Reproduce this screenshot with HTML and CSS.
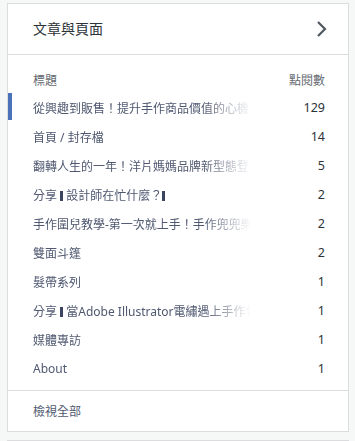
FILE: index.html
```html
<!DOCTYPE html>
<html lang="zh-Hant">
<head>
    <meta charset="UTF-8">
    <meta name="viewport" content="width=device-width, initial-scale=1.0">
    <title>文章與頁面</title>
    <link rel="stylesheet" href="styles.css">
</head>
<body>
    <div class="card">
        <div class="card-header">
            <h2>文章與頁面</h2>
            <svg class="chevron" width="12" height="18" viewBox="0 0 12 18">
                <path d="M2 2 L9 9 L2 16" fill="none" stroke="#50575e" stroke-width="2.2"/>
            </svg>
        </div>

        <div class="list">
            <div class="list-head">
                <span>標題</span>
                <span>點閱數</span>
            </div>
            <div class="row active">
                <span class="title">從興趣到販售！提升手作商品價值的心機</span>
                <span class="count">129</span>
            </div>
            <div class="row">
                <span class="title">首頁 / 封存檔</span>
                <span class="count">14</span>
            </div>
            <div class="row">
                <span class="title">翻轉人生的一年！洋片媽媽品牌新型態登場</span>
                <span class="count">5</span>
            </div>
            <div class="row">
                <span class="title">分享 <span class="glyph"></span> 設計師在忙什麼？<span class="glyph"></span></span>
                <span class="count">2</span>
            </div>
            <div class="row">
                <span class="title">手作圍兒教學-第一次就上手！手作兜兜樂</span>
                <span class="count">2</span>
            </div>
            <div class="row">
                <span class="title">雙面斗篷</span>
                <span class="count">2</span>
            </div>
            <div class="row">
                <span class="title">髮帶系列</span>
                <span class="count">1</span>
            </div>
            <div class="row">
                <span class="title">分享 <span class="glyph"></span> 當Adobe Illustrator電繡遇上手作包</span>
                <span class="count">1</span>
            </div>
            <div class="row">
                <span class="title">媒體專訪</span>
                <span class="count">1</span>
            </div>
            <div class="row">
                <span class="title">About</span>
                <span class="count">1</span>
            </div>
        </div>

        <div class="card-footer">
            <a href="#">檢視全部</a>
        </div>
    </div>
    <div class="card next"></div>
</body>
</html>
```

FILE: styles.css
```css
body {
    margin: 0;
    padding: 3px 6px 0 7px;
    background-color: #f6f7f7;
    font-family: "Noto Sans", "Noto Sans CJK TC", sans-serif;
    color: #2c3338;
}

.card {
    background-color: #fff;
    border: 1px solid #dcdcde;
}

.card.next {
    margin-top: 8px;
    height: 20px;
}

.card-header {
    height: 50px;
    display: flex;
    align-items: center;
    justify-content: space-between;
    padding: 0 20px 0 25px;
    border-bottom: 1px solid #dcdcde;
}

.card-header h2 {
    margin: 0;
    font-size: 14px;
    font-weight: normal;
    line-height: 20px;
    color: #2c3338;
}

.chevron {
    display: block;
}

.list {
    padding: 11px 0 7px;
}

.list-head {
    display: flex;
    justify-content: space-between;
    align-items: center;
    height: 27px;
    padding: 0 23px 0 25px;
    font-size: 12px;
    color: #646970;
}

.row {
    position: relative;
    display: flex;
    justify-content: space-between;
    align-items: center;
    height: 29px;
    padding: 0 23px 0 25px;
    font-size: 12px;
}

.row.active::before {
    content: "";
    position: absolute;
    left: 0;
    top: 0;
    width: 4px;
    height: 27px;
    background-color: #4a72b8;
}

.title {
    width: 222px;
    white-space: nowrap;
    overflow: hidden;
    color: #4f5870;
    -webkit-mask-image: linear-gradient(to right, #000 170px, transparent 218px);
    mask-image: linear-gradient(to right, #000 170px, transparent 218px);
}

.glyph {
    display: inline-block;
    width: 3px;
    height: 10px;
    background-color: #3c4560;
    vertical-align: -1px;
}

.count {
    color: #2c3338;
    font-size: 12.5px;
}

.card-footer {
    height: 40px;
    display: flex;
    align-items: center;
    padding: 0 25px;
    border-top: 1px solid #dcdcde;
}

.card-footer a {
    font-size: 12px;
    color: #4f5870;
    text-decoration: none;
}
```
